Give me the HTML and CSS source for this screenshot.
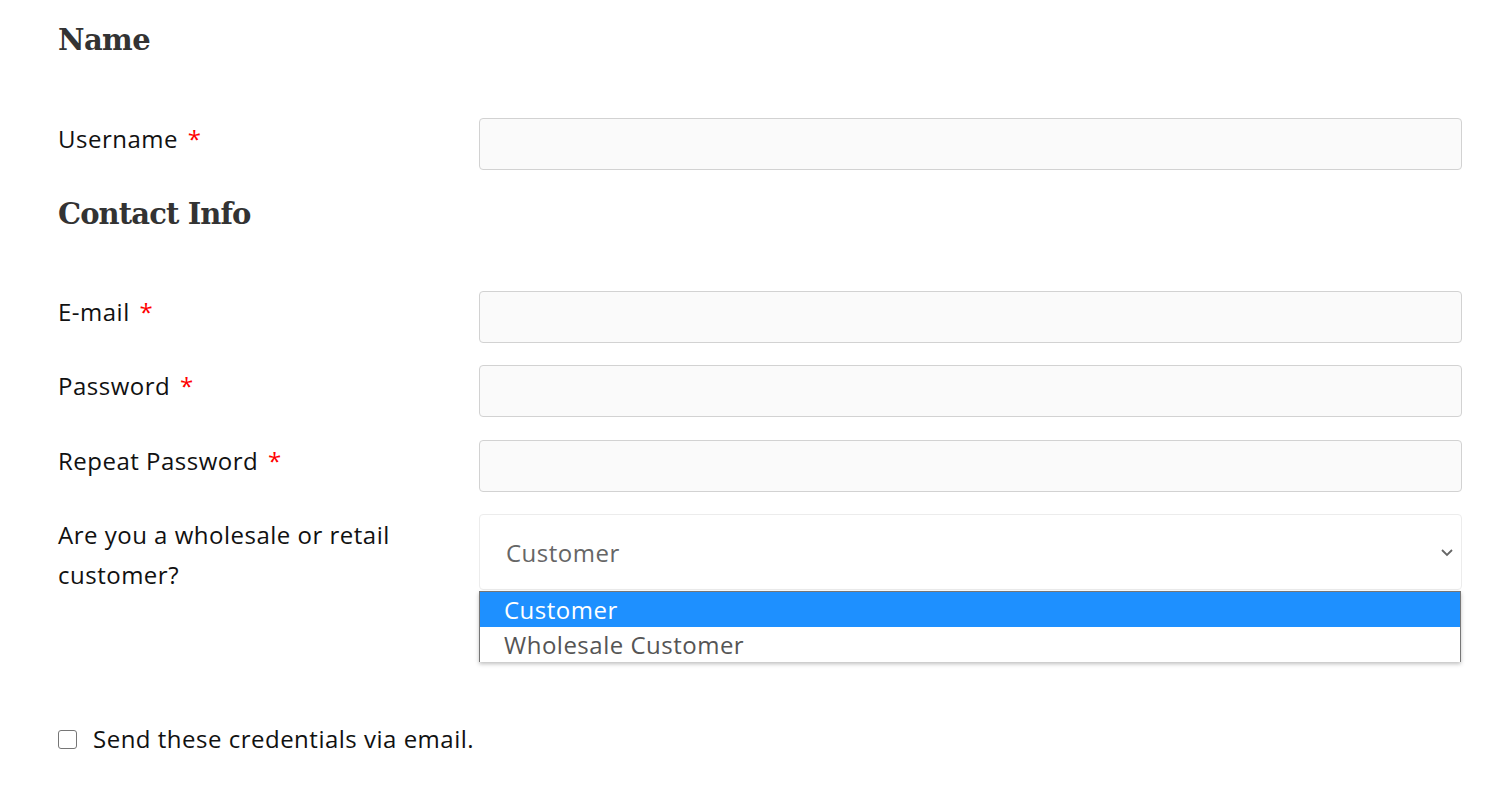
FILE: index.html
```html
<!DOCTYPE html>
<html lang="en">
<head>
<meta charset="utf-8">
<title>Register</title>
<link rel="stylesheet" href="styles.css">
</head>
<body>
<form class="form">
  <h2 class="section-title">Name</h2>
  <div class="row">
    <label class="label">Username <span class="req">*</span></label>
    <input class="field" type="text">
  </div>

  <h2 class="section-title section-title--next">Contact Info</h2>
  <div class="row">
    <label class="label">E-mail <span class="req">*</span></label>
    <input class="field" type="email">
  </div>
  <div class="row row--loose">
    <label class="label">Password <span class="req">*</span></label>
    <input class="field" type="password">
  </div>
  <div class="row">
    <label class="label">Repeat Password <span class="req">*</span></label>
    <input class="field" type="password">
  </div>
  <div class="row">
    <label class="label">Are you a wholesale or retail customer?</label>
    <div class="select-wrap">
      <div class="select">
        <span class="select-value">Customer</span>
        <svg class="chevron" width="14" height="10" viewBox="0 0 14 10"><path d="M2 3 L7 8 L12 3" fill="none" stroke="#666" stroke-width="1.8"/></svg>
      </div>
      <ul class="dropdown">
        <li class="option option--active">Customer</li>
        <li class="option">Wholesale Customer</li>
      </ul>
    </div>
  </div>

  <div class="check-row">
    <span class="checkbox"></span>
    <span class="check-label">Send these credentials via email.</span>
  </div>
</form>
</body>
</html>
```
FILE: styles.css
```css
html, body {
  margin: 0;
  padding: 0;
  background: #fff;
}
body {
  font-family: "Open Sans", "Noto Sans", sans-serif;
  font-size: 24px;
  letter-spacing: 0.5px;
  color: #111;
}
.form {
  padding: 20px 40px 0 58px;
}
.section-title {
  font-family: "DejaVu Serif", "Liberation Serif", serif;
  font-weight: bold;
  font-size: 29px;
  line-height: 40px;
  color: #333;
  margin: 0 0 58px;
  letter-spacing: -0.6px;
}
.section-title--next {
  margin-top: 24px;
  margin-bottom: 57px;
  letter-spacing: -0.9px;
}
.row {
  display: grid;
  grid-template-columns: 421px 1fr;
  margin-bottom: 22px;
}
.row--loose {
  margin-bottom: 23px;
}
.label {
  line-height: 40px;
  padding-top: 1px;
  padding-right: 20px;
}
.req {
  color: #f00;
  margin-left: 3px;
}
.field {
  box-sizing: border-box;
  height: 52px;
  width: 100%;
  margin: 0;
  background: #fafafa;
  border: 1px solid #d2d2d2;
  border-radius: 4px;
}
.select-wrap {
  position: relative;
}
.select {
  box-sizing: border-box;
  height: 76px;
  border: 1px solid #ececec;
  border-radius: 4px;
  background: #fff;
  display: flex;
  align-items: center;
  justify-content: space-between;
  padding: 0 7px 0 26px;
  color: #666;
}
.chevron {
  display: block;
}
.dropdown {
  position: absolute;
  left: 0;
  right: 1px;
  top: 77px;
  margin: 0;
  padding: 0;
  list-style: none;
  background: #fff;
  border: 1px solid #767676;
  border-bottom: none;
  box-shadow: 0 2px 4px rgba(0, 0, 0, 0.25);
}
.option {
  height: 35px;
  line-height: 35px;
  padding-left: 24px;
  color: #555;
}
.option--active {
  background: #1e90ff;
  color: #fff;
}
.check-row {
  display: flex;
  align-items: center;
  margin-top: 124px;
  gap: 16px;
}
.checkbox {
  box-sizing: border-box;
  width: 19px;
  height: 19px;
  border: 1px solid #767676;
  border-radius: 3px;
  background: #fff;
}
.check-label {
  line-height: 40px;
}
```
